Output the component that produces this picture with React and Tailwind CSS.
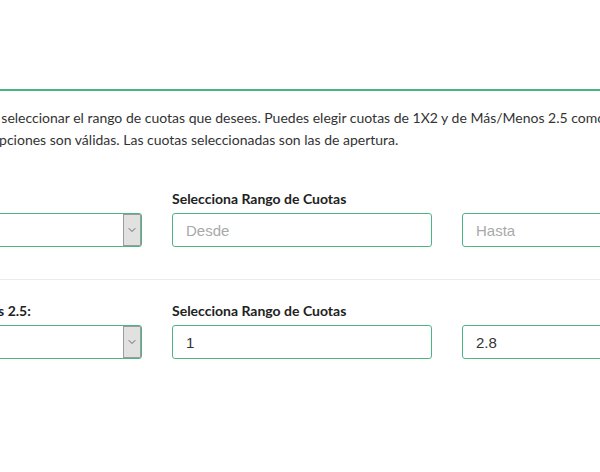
import { ChevronDown } from "lucide-react";

function OddsSelect() {
  return (
    <div className="relative h-[34px] w-full rounded-[3px] border border-[#4db583] bg-white">
      <div className="absolute right-0 top-0 bottom-0 flex w-[18px] items-center justify-center border border-[#9c9c9c] bg-[#e1e1e1]">
        <ChevronDown className="h-3 w-3 text-[#444]" strokeWidth={1.6} />
      </div>
    </div>
  );
}

function OddsInput({ placeholder, value }) {
  return (
    <input
      type="text"
      placeholder={placeholder}
      defaultValue={value}
      className="h-[34px] w-full rounded-[3px] border border-[#4db583] bg-white px-[13px] font-['Liberation_Sans',Arial,sans-serif] text-[15px] text-[#333] placeholder:text-[#a9a9a9] outline-none"
    />
  );
}

function FilterRow({ market, from, to }) {
  return (
    <div className="grid grid-cols-[260px_260px_260px] gap-x-[30px]">
      <div>
        <label className="mb-[5px] block h-[18px] text-[14px] font-bold leading-[18px] text-[#222] whitespace-nowrap">
          {market}
        </label>
        <OddsSelect />
      </div>
      <div>
        <label className="mb-[5px] block h-[18px] text-[14px] font-bold leading-[18px] text-[#222] whitespace-nowrap">
          Selecciona Rango de Cuotas
        </label>
        <OddsInput placeholder="Desde" value={from} />
      </div>
      <div>
        <label className="mb-[5px] block h-[18px] text-[14px] font-bold leading-[18px] text-[#222]">
          &nbsp;
        </label>
        <OddsInput placeholder="Hasta" value={to} />
      </div>
    </div>
  );
}

export default function App() {
  return (
    <div className="h-[472px] w-[600px] overflow-hidden bg-white font-['Lato','Open_Sans',sans-serif] text-[#333]">
      <div className="mt-[89px] h-[2px] w-full bg-[#47b482]" />

      <div className="-ml-[118px] w-[840px]">
        <p className="-ml-[14px] mt-[16px] text-[14px] leading-[22px] whitespace-nowrap">
          Aquí también puedes seleccionar el rango de cuotas que desees. Puedes elegir cuotas de 1X2 y de Más/Menos 2.5 como filtro, ambas
          <br />
          Cualquiera de estas opciones son válidas. Las cuotas seleccionadas son las de apertura.
        </p>

        <div className="mt-[39px]">
          <FilterRow market="Cuotas 1X2:" />
        </div>
      </div>

      <div className="mt-[32px] h-px w-full bg-[#ececec]" />

      <div className="-ml-[118px] mt-[22px] w-[840px]">
        <FilterRow market="Cuotas Más/Menos 2.5:" from="1" to="2.8" />
      </div>
    </div>
  );
}
